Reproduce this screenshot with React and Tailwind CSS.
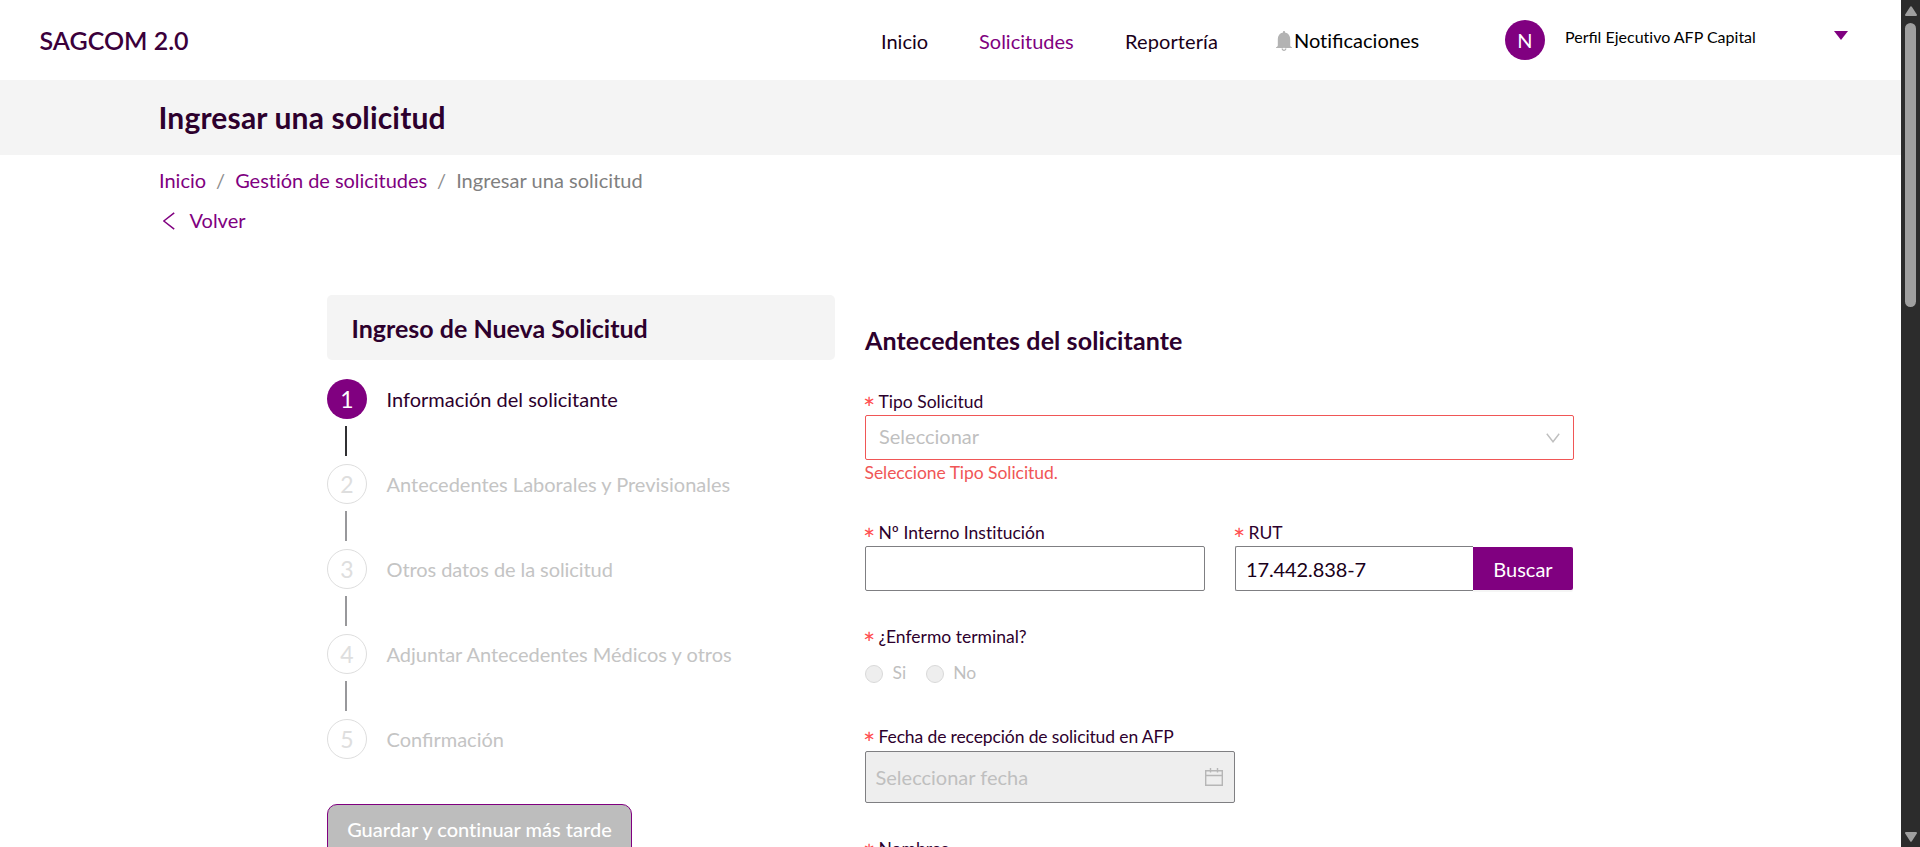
const steps = [
  "Información del solicitante",
  "Antecedentes Laborales y Previsionales",
  "Otros datos de la solicitud",
  "Adjuntar Antecedentes Médicos y otros",
  <><Lig>Confi</Lig>rmación</>,
];

function Lig({ children }) {
  return <span className="[font-variant-ligatures:normal]">{children}</span>;
}

function Label({ children, className = "" }) {
  return (
    <div className={"flex h-7 items-center whitespace-nowrap pt-[2px] text-[17.5px] leading-[26px] text-[#2d002d] " + className}>
      <span className="mr-[3.5px] -ml-[2px] w-[12px] pt-[11px] text-[29px] leading-none tracking-normal text-[#ff4d4f]">*</span>
      {children}
    </div>
  );
}

function Header() {
  return (
    <header className="flex h-20 shrink-0 items-start bg-white pl-[39.5px] text-[20px] leading-[30px]">
      <div className="w-[841.5px] pt-[25px] text-[25px] font-semibold leading-[30px] text-[#3b003b]">SAGCOM 2.0</div>
      <nav className="flex text-[#190019]">
        <a className="w-[98px] pt-[26px]">Inicio</a>
        <a className="w-[146px] pt-[26px] text-[#800080]">Solicitudes</a>
        <a className="w-[151px] pt-[26px] tracking-[0.1px]">Reportería</a>
        <a className="flex w-[229px] pt-[25px] text-black">
          <svg className="mt-[6px] mr-[2px] h-5 w-4" viewBox="0 0 16 20" fill="#b3b3b3">
            <path d="M8 0c.8 0 1 .5 1 1.4C12.300 2 14.200 4.600 14.200 8v6.500c0 .8.600 1.300 1.800 1.700v.8H0v-.8c1.200-.4 1.800-.9 1.800-1.700V8C1.800 4.600 3.700 2 7 1.400 7 .5 7.200 0 8 0zM5.500 17.500h5C10.300 19 9.400 20 8 20s-2.300-1-2.500-2.500z" />
            <circle cx="8" cy="17.800" r="1" fill="#fff" />
          </svg>
          <span>Noti<Lig>ficaciones</Lig></span>
        </a>
      </nav>
      <div className="mt-5 flex size-10 items-center justify-center rounded-full bg-[#800080] text-[20px] text-white">N</div>
      <div className="ml-5 w-[269px] pt-[22px] text-[16px] text-black"><Lig>Perfil</Lig> Ejecutivo AFP Capital</div>
      <svg className="mt-[31px] h-[9px] w-[14px]" viewBox="0 0 14 9" fill="#800080">
        <path d="M0 0h14L7 9z" />
      </svg>
    </header>
  );
}

function Steps() {
  return (
    <ol className="mt-[19px] text-[20px]">
      {steps.map((s, i) => (
        <li key={i} className="h-[85px]">
          <div className="flex h-10">
            <div
              className={
                "flex size-10 items-center justify-center rounded-full text-[23px] leading-none " +
                (i === 0 ? "bg-[#800080] text-white" : "border border-[#dedede] text-[#dedede]")
              }
            >
              {i + 1}
            </div>
            <div
              className={
                "ml-[19.5px] pt-[5px] leading-[31px] " +
                (i === 0 ? "text-[#2d002d]" : "text-[#c4c4c4]") +
                (i === 2 ? " tracking-[-0.08px]" : "")
              }
            >
              {s}
            </div>
          </div>
          {i < 4 && <div className={"mt-[7px] ml-[18px] h-[30px] w-[2px] " + (i === 0 ? "bg-[#303033]" : "bg-[#98989b]")} />}
        </li>
      ))}
    </ol>
  );
}

function Radio({ text }) {
  return (
    <div className="flex items-center">
      <span className="mt-[2px] mr-[9.5px] size-[18px] rounded-full border border-[#d9d9d9] bg-[#eeeeee]" />
      {text}
    </div>
  );
}

function Form() {
  return (
    <section className="ml-[30px] w-[709px] pt-[30px]">
      <h2 className="text-[25px] font-bold leading-[30px] tracking-[0.1px] text-[#2d002d]">Antecedentes del solicitante</h2>
      <div className="mt-[32px]">
        <Label>Tipo Solicitud</Label>
      </div>
      <div className="flex h-[45px] items-center justify-between rounded-[2px] border border-[#f05656] pr-[13px] pl-[13px] text-[20px] leading-[43px] text-[#bfbfbf]">
        <span className="pb-[2px] leading-[41px]">Seleccionar</span>
        <svg className="h-[10px] w-[14px]" viewBox="0 0 14 10" fill="none" stroke="#bfbfbf" strokeWidth="1.400">
          <path d="M.8.8 7 8.800 13.200.8" />
        </svg>
      </div>
      <div className="-ml-[0.5px] h-7 text-[17.5px] leading-[25px] tracking-[-0.05px] text-[#f05656]">Seleccione Tipo Solicitud.</div>
      <div className="mt-[30px] flex gap-[30px]">
        <div className="w-[340px]">
          <Label>Nº Interno Institución</Label>
          <div className="h-[45px] rounded-[2px] border border-[#7f7f82]" />
        </div>
        <div className="w-[338px]">
          <Label>RUT</Label>
          <div className="flex h-[45px] items-center text-[20px]">
            <div className="h-[45px] w-[238px] rounded-l-[2px] border border-r-0 border-[#7f7f82] pl-[10px] leading-[44px] tracking-[-0.1px] text-[#190019]">
              17.442.838-7
            </div>
            <div className="h-[43px] w-[100px] rounded-r-[2px] bg-[#800080] text-center leading-[44px] text-white shadow-[0_2px_0_rgba(0,0,0,0.04)]">
              Buscar
            </div>
          </div>
        </div>
      </div>
      <div className="mt-[31px]">
        <Label>¿Enfermo terminal?</Label>
      </div>
      <div className="mt-[9px] flex h-7 gap-[19.5px] text-[17.5px] leading-7 text-[#bfbfbf]">
        <Radio text="Si" />
        <Radio text="No" />
      </div>
      <div className="mt-[35px] mb-px">
        <Label className="tracking-[-0.12px]">Fecha de recepción de solicitud en AFP</Label>
      </div>
      <div className="flex h-[52px] w-[370px] items-center justify-between rounded-[2px] border border-[#7f7f82] bg-[#eeeeee] pr-[11px] pl-[9.5px] text-[20px] leading-[50px] text-[#bfbfbf]">
        <span>Seleccionar fecha</span>
        <svg className="h-[18px] w-[18px]" viewBox="0 0 18 18" fill="none" stroke="#b6b6b6" strokeWidth="1.400">
          <path d="M.7 2.700h16.600v14.600H.7zM.7 7.500h16.600M5.500 0v4.500M12.500 0v4.500" />
        </svg>
      </div>
      <div className="mt-[31px]">
        <Label>Nombres</Label>
      </div>
    </section>
  );
}

function Scrollbar() {
  return (
    <div className="flex w-[19px] shrink-0 flex-col items-center bg-[#2c2c2c] pt-[6px]">
      <svg className="h-[10px] w-3" viewBox="0 0 12 10" fill="#9f9f9f" stroke="#9f9f9f" strokeLinejoin="round" strokeWidth="2">
        <path d="M6 1.300 11 9H1z" />
      </svg>
      <div className="mt-[7px] h-[284px] w-[11px] rounded-full bg-[#9f9f9f]" />
      <svg className="mt-auto mb-[5px] h-[10px] w-3" viewBox="0 0 12 10" fill="#9f9f9f" stroke="#9f9f9f" strokeLinejoin="round" strokeWidth="2">
        <path d="M6 8.700 11 1H1z" />
      </svg>
    </div>
  );
}

export default function App() {
  return (
    <div className="flex h-[847px] overflow-hidden bg-white font-['Lato',sans-serif] [font-variant-ligatures:none]">
      <div className="flex min-w-0 flex-1 flex-col">
        <Header />
        <div className="h-[75px] shrink-0 bg-[#f4f4f4] pt-[17px] pl-[158.5px] text-[30px] font-bold leading-10 tracking-[0.17px] text-[#2d002d]">
          Ingresar una solicitud
        </div>
        <div className="flex h-[46px] shrink-0 gap-[10px] pt-[9px] pl-[159px] text-[20px] leading-8 text-[#800080]">
          <span>Inicio</span>
          <span className="text-[#8c8c8c]">/</span>
          <span className="tracking-[-0.04px]">Gestión de solicitudes</span>
          <span className="text-[#8c8c8c]">/</span>
          <span className="tracking-[0.04px] text-[#808080]">Ingresar una solicitud</span>
        </div>
        <div className="flex h-[94px] shrink-0 pt-[3px] pl-[163px] text-[20px] leading-8 text-[#800080]">
          <svg className="mt-[8px] mr-[14.5px] h-[18px] w-3" viewBox="0 0 12 18" fill="none" stroke="#800080" strokeWidth="1.500">
            <path d="M11.200.8.8 9l10.400 8.200" />
          </svg>
          Volver
        </div>
        <div className="flex pl-[327px]">
          <section className="w-[508px]">
            <h2 className="h-[65px] rounded-[5px] bg-[#f4f4f4] pt-[18px] pl-[24.5px] text-[25px] font-bold leading-[31px] text-[#2d002d]">
              Ingreso de Nueva Solicitud
            </h2>
            <Steps />
            <div className="flex h-[53px] w-[305px] justify-center rounded-[10px] border border-[#800080] bg-[#bdbdbd] text-[20px] font-medium leading-[48px] text-white">
              Guardar y continuar más tarde
            </div>
          </section>
          <Form />
        </div>
      </div>
      <Scrollbar />
    </div>
  );
}
